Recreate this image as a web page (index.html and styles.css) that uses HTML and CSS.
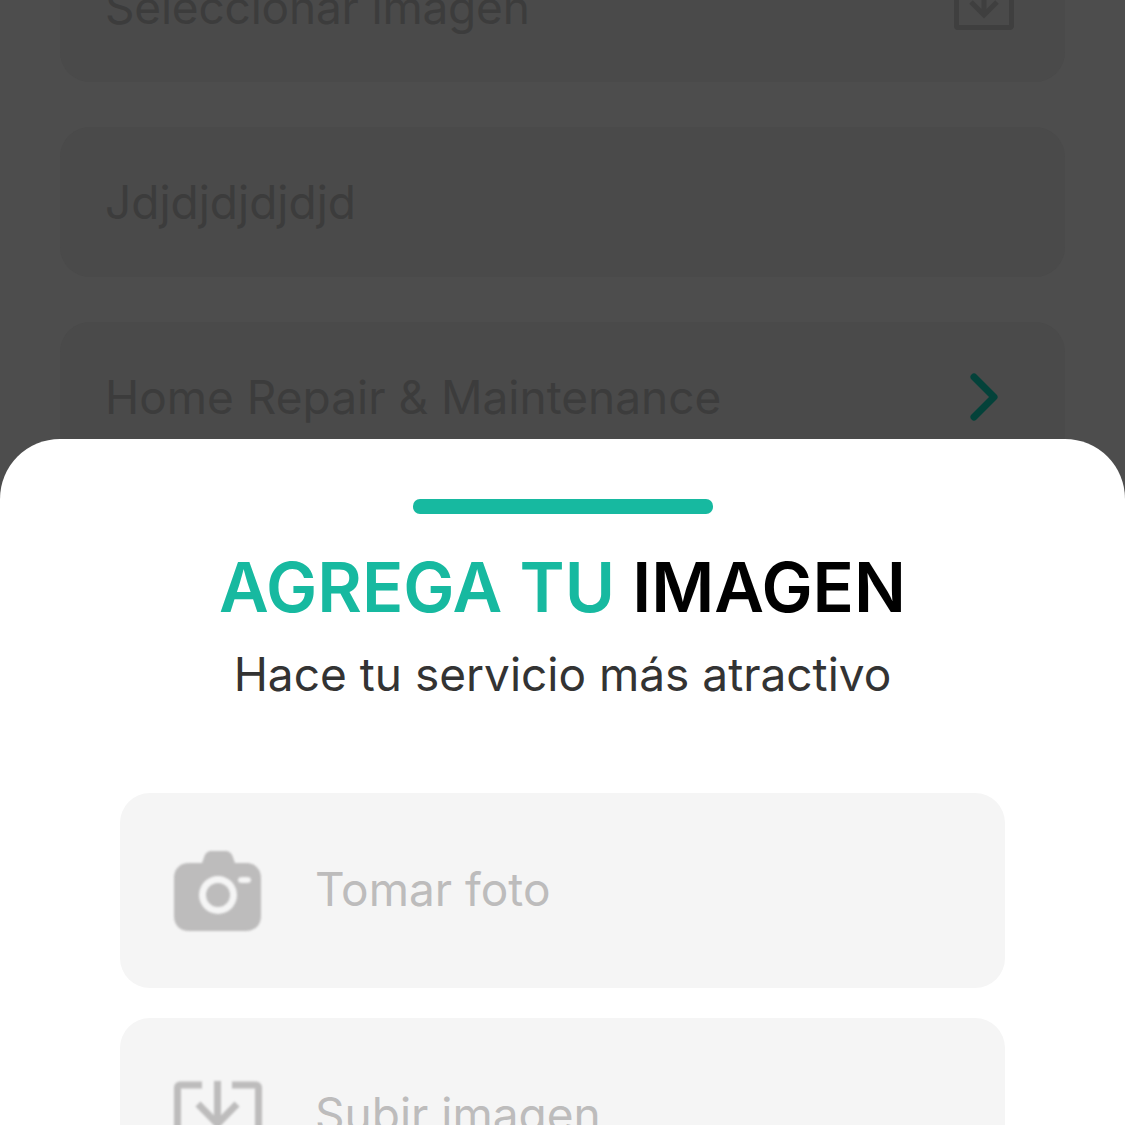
FILE: index.html
```html
<!DOCTYPE html>
<html lang="es">
<head>
    <meta charset="UTF-8">
    <meta name="viewport" content="width=device-width, initial-scale=1.0">
    <title>Agrega tu imagen</title>
    <link rel="stylesheet" href="styles.css">
</head>
<body>
    <div class="screen">
        <div class="form">
            <div class="field">
                <span class="field-text field-text-first">Seleccionar imagen</span>
                <svg class="field-upload" viewBox="0 0 60 60" fill="none" stroke="#3f3f3f" stroke-width="5">
                    <path d="M18 4H4a1.500 1.500 0 0 0-1.500 1.500V51a1.500 1.500 0 0 0 1.500 1.500h52a1.500 1.500 0 0 0 1.500-1.500V5.500A1.500 1.500 0 0 0 56 4H42"/>
                    <path d="M30 1v38M17 27l13 13 13-13"/>
                </svg>
            </div>
            <div class="field">
                <span class="field-text">Jdjdjdjdjdjd</span>
            </div>
            <div class="field">
                <span class="field-text">Home Repair &amp; Maintenance</span>
                <svg class="field-arrow" viewBox="0 0 30 48" fill="none" stroke="#04423a" stroke-width="7" stroke-linecap="round" stroke-linejoin="round">
                    <path d="M5 4l20 20L5 44"/>
                </svg>
            </div>
        </div>

        <div class="sheet">
            <div class="sheet-handle"></div>
            <h2 class="sheet-title"><span class="accent">AGREGA TU</span> IMAGEN</h2>
            <p class="sheet-subtitle">Hace tu servicio más atractivo</p>

            <div class="option">
                <svg class="option-icon" viewBox="0 0 88 80">
                    <path fill="#bdbcbc" fill-rule="evenodd" d="M28 12l2.500-7C32 1.500 34 0 38 0h13c4 0 6 1.500 7.500 5l2.500 7h11c9 0 15 6 15 15v38c0 9-6 15-15 15H15C6 80 0 74 0 65V27c0-9 6-15 15-15zM44 25a19 19 0 1 0 0 38 19 19 0 0 0 0-38zm0 7a12 12 0 1 1 0 24 12 12 0 0 1 0-24zm24-6a4 3 0 0 0 0 6h5a4 3 0 0 0 0-6z"/>
                </svg>
                <span class="option-label">Tomar foto</span>
            </div>
            <div class="option">
                <svg class="option-icon" viewBox="0 -5 88 80" fill="none" stroke="#bdbcbc" stroke-width="7">
                    <path d="M28 4H6a2.500 2.500 0 0 0-2.500 2.500V74A2.500 2.500 0 0 0 6 76.500h76a2.500 2.500 0 0 0 2.500-2.500V6.500A2.500 2.500 0 0 0 82 4H58"/>
                    <path d="M43.500 0v43M24 23l19.500 20L63 23"/>
                </svg>
                <span class="option-label">Subir imagen</span>
            </div>
        </div>
    </div>
</body>
</html>
```

FILE: styles.css
```css
* {
    box-sizing: border-box;
}

body {
    margin: 0;
    font-family: Inter, "Noto Sans", sans-serif;
}

.screen {
    position: relative;
    width: 1125px;
    height: 1125px;
    overflow: hidden;
    background-color: #4d4d4d;
}

/* form behind the sheet, scrolled up past its first field */
.form {
    display: flex;
    flex-direction: column;
    gap: 45px;
    margin-top: -68px;
    padding: 0 60px;
}

.field {
    display: flex;
    align-items: center;
    justify-content: space-between;
    height: 150px;
    padding: 0 51px 0 45px;
    background-color: #4a4a4a;
    border-radius: 30px;
}

.field-text {
    font-size: 46px;
    line-height: 56px;
    color: #3c3c3c;
}

.field-text-first {
    letter-spacing: -0.2px;
}

.field-upload {
    width: 60px;
    height: 60px;
    margin-top: -4px;
}

.field-arrow {
    width: 30px;
    height: 48px;
    margin-right: 15px;
}

.sheet {
    position: absolute;
    top: 439px;
    left: 0;
    right: 0;
    bottom: 0;
    display: flex;
    flex-direction: column;
    align-items: center;
    padding: 60px 120px 0;
    background-color: #fff;
    border-radius: 60px 60px 0 0;
}

.sheet-handle {
    flex: none;
    width: 300px;
    height: 15px;
    background-color: #17b9a0;
    border-radius: 7px;
}

.sheet-title {
    margin: 31px 0 0;
    font-size: 68.4px;
    line-height: 84px;
    font-weight: 600;
    color: #000;
    white-space: nowrap;
}

.accent {
    color: #17b9a0;
}

.sheet-subtitle {
    margin: 17px 0 0;
    font-size: 46px;
    line-height: 56px;
    color: #333;
    white-space: nowrap;
}

.option {
    flex: none;
    display: flex;
    align-items: center;
    gap: 53px;
    width: 100%;
    height: 195px;
    margin-top: 30px;
    padding-left: 54px;
    background-color: #f5f5f5;
    border-radius: 30px;
}

.sheet-subtitle + .option {
    margin-top: 91px;
}

.option-icon {
    flex: none;
    width: 88px;
    height: 80px;
    filter: blur(1px);
}

.option-label {
    margin-bottom: 3px;
    font-size: 46px;
    line-height: 56px;
    color: #bdbcbc;
}
```
